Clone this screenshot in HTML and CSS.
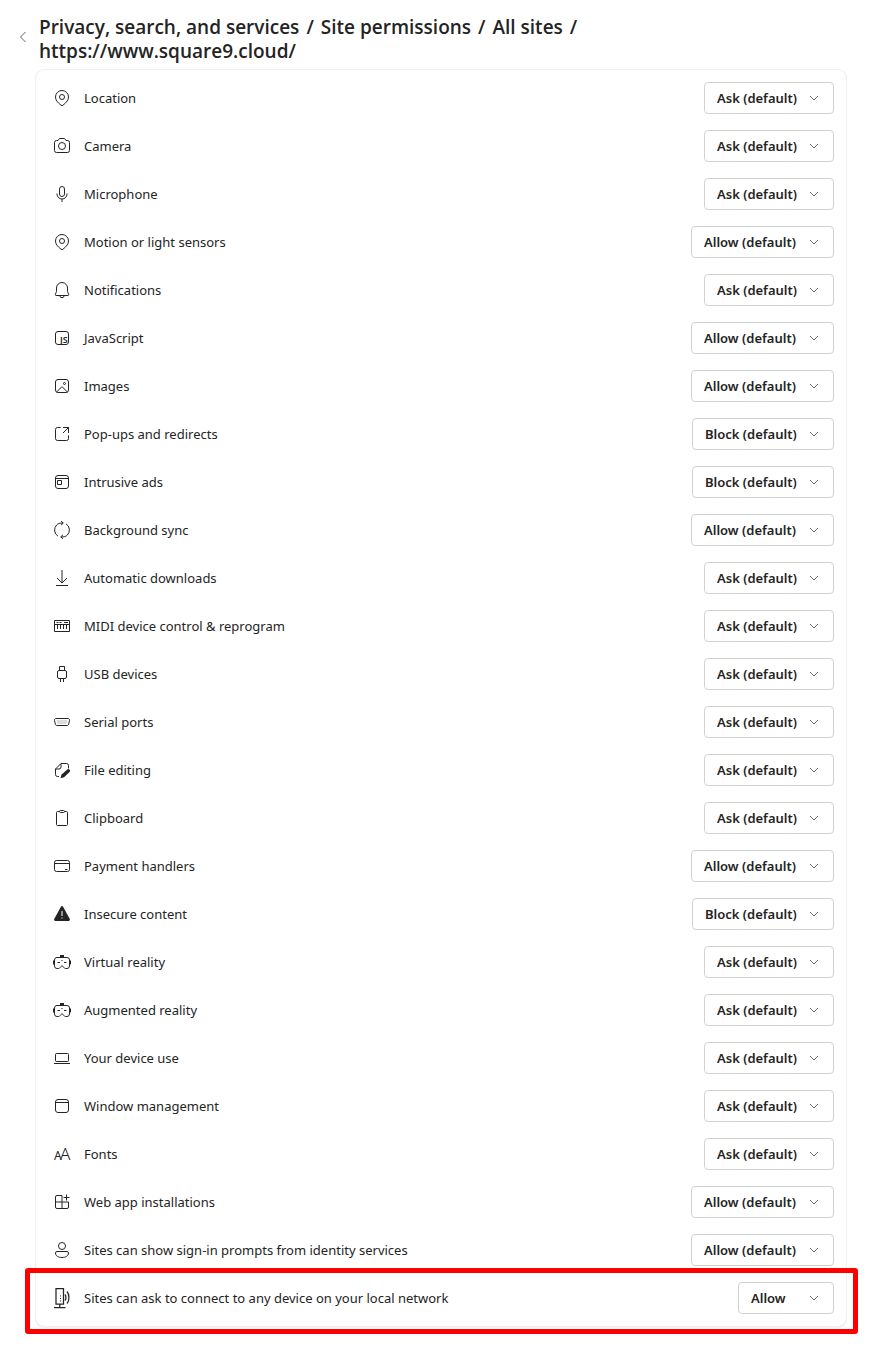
FILE: index.html
```
<!DOCTYPE html>
<html lang="en">
<head>
    <title>Site permissions</title>
    <meta charset="UTF-8">
    <meta name="viewport" content="width=device-width, initial-scale=1.0">
    <link rel="stylesheet" href="styles.css">
</head>
<body>
    <!-- shared shapes -->
    <svg class="shapes" aria-hidden="true">
        <symbol id="chevron" viewBox="0 0 12 12"><path d="M2 4l4 4 4-4"/></symbol>
        <symbol id="pin" viewBox="0 0 20 20"><path d="M10 2.5A6.5 6.5 0 0 0 3.5 9c0 3.2 2.2 5.5 5.5 8.2a1.6 1.6 0 0 0 2 0c3.3-2.7 5.5-5 5.5-8.2A6.5 6.5 0 0 0 10 2.5z"/><circle cx="10" cy="9" r="2.5"/></symbol>
        <symbol id="headset" viewBox="0 0 20 20"><path d="M5 5.5h10A2.5 2.500 0 0 1 17.500 8v6a2.500 2.500 0 0 1-2.500 2.500h-1.500c-.8 0-1.200-.4-1.600-1l-.7-.9c-.6-.8-1.800-.8-2.400 0l-.7.9c-.4.6-.8 1-1.600 1H5A2.500 2.500 0 0 1 2.500 14V8A2.500 2.500 0 0 1 5 5.500zM5.500 10.500H8M12 10.500h2.500"/><path class="dot" d="M9 8.500h2"/><path class="solid" d="M8 3h4v2.500H8zM1 8.500h1.500v4H1zM17.500 8.500H19v4h-1.500z"/></symbol>
    </svg>

    <header class="page-header">
        <button type="button" class="back" aria-label="Back">
            <svg viewBox="0 0 10 14"><path d="M7.500 2L2.500 7l5 5"/></svg>
        </button>
        <h1 class="breadcrumb">
            <a href="#">Privacy, search, and services</a>
            <span>/</span>
            <a href="#">Site permissions</a>
            <span>/</span>
            <a href="#">All sites</a>
            <span>/</span>
            <span>https://www.square9.cloud/</span>
        </h1>
    </header>

    <main class="card">
        <div class="row">
            <svg class="icon"><use href="#pin"/></svg>
            <label for="location">Location</label>
            <div class="picker">
                <select id="location" class="ask"><option>Ask (default)</option><option>Allow</option><option>Block</option></select>
                <svg class="chevron"><use href="#chevron"/></svg>
            </div>
        </div>
        <div class="row">
            <svg class="icon" viewBox="0 0 20 20"><path d="M7.5 2.500h5l1.500 2h1.500a2 2 0 0 1 2 2v8a2 2 0 0 1-2 2h-11a2 2 0 0 1-2-2v-8a2 2 0 0 1 2-2H6z"/><circle cx="10" cy="10" r="3.500"/></svg>
            <label for="camera">Camera</label>
            <div class="picker">
                <select id="camera" class="ask"><option>Ask (default)</option><option>Allow</option><option>Block</option></select>
                <svg class="chevron"><use href="#chevron"/></svg>
            </div>
        </div>
        <div class="row">
            <svg class="icon" viewBox="0 0 20 20"><rect x="7.500" y="2.500" width="5" height="10" rx="2.500"/><path d="M5 9.500v.5a5 5 0 0 0 10 0v-.5M10 15v3"/></svg>
            <label for="microphone">Microphone</label>
            <div class="picker">
                <select id="microphone" class="ask"><option>Ask (default)</option><option>Allow</option><option>Block</option></select>
                <svg class="chevron"><use href="#chevron"/></svg>
            </div>
        </div>
        <div class="row">
            <svg class="icon"><use href="#pin"/></svg>
            <label for="sensors">Motion or light sensors</label>
            <div class="picker">
                <select id="sensors" class="allow"><option>Allow (default)</option><option>Block</option></select>
                <svg class="chevron"><use href="#chevron"/></svg>
            </div>
        </div>
        <div class="row">
            <svg class="icon" viewBox="0 0 20 20"><path d="M10 2.500A5.500 5.500 0 0 0 4.500 8v3.500l-1.200 3c-.1.500.1 1 .7 1h12c.6 0 .8-.5.7-1l-1.200-3V8A5.500 5.500 0 0 0 10 2.500zM7.800 15.500a2.200 2.200 0 0 0 4.400 0"/></svg>
            <label for="notifications">Notifications</label>
            <div class="picker">
                <select id="notifications" class="ask"><option>Ask (default)</option><option>Allow</option><option>Block</option></select>
                <svg class="chevron"><use href="#chevron"/></svg>
            </div>
        </div>
        <div class="row">
            <svg class="icon" viewBox="0 0 20 20"><rect x="3.500" y="3.500" width="13" height="13" rx="2.500"/><text class="js-text" x="8" y="15">JS</text></svg>
            <label for="javascript">JavaScript</label>
            <div class="picker">
                <select id="javascript" class="allow"><option>Allow (default)</option><option>Block</option></select>
                <svg class="chevron"><use href="#chevron"/></svg>
            </div>
        </div>
        <div class="row">
            <svg class="icon" viewBox="0 0 20 20"><rect x="3.500" y="3.500" width="13" height="13" rx="2.500"/><path d="M4.500 16l4.800-4.700a1 1 0 0 1 1.400 0l4.800 4.700"/><circle cx="12.500" cy="7.500" r="1"/></svg>
            <label for="images">Images</label>
            <div class="picker">
                <select id="images" class="allow"><option>Allow (default)</option><option>Block</option></select>
                <svg class="chevron"><use href="#chevron"/></svg>
            </div>
        </div>
        <div class="row">
            <svg class="icon" viewBox="0 0 20 20"><path d="M8.500 3.500h-3a2 2 0 0 0-2 2v9a2 2 0 0 0 2 2h9a2 2 0 0 0 2-2v-3M11 3.500h5.500V9M16.500 3.500L11 9"/></svg>
            <label for="popups">Pop-ups and redirects</label>
            <div class="picker">
                <select id="popups" class="block"><option>Block (default)</option><option>Allow</option></select>
                <svg class="chevron"><use href="#chevron"/></svg>
            </div>
        </div>
        <div class="row">
            <svg class="icon" viewBox="0 0 20 20"><rect x="3.500" y="3.500" width="13" height="13" rx="2.500"/><path d="M3.500 6.500h13M5.500 8.500h4v4h-4z"/></svg>
            <label for="ads">Intrusive ads</label>
            <div class="picker">
                <select id="ads" class="block"><option>Block (default)</option><option>Allow</option></select>
                <svg class="chevron"><use href="#chevron"/></svg>
            </div>
        </div>
        <div class="row">
            <svg class="icon" viewBox="0 0 20 20"><path d="M6 16.200A7.300 7.300 0 0 1 4.600 5C6 3.500 8 2.900 11 3.100M9 1.200l2.300 1.900L9 5.200M14 3.800A7.300 7.300 0 0 1 15.400 15c-1.400 1.500-3.400 2.100-6.400 1.900M11 14.800l-2.300 2.100L11 18.800"/></svg>
            <label for="sync">Background sync</label>
            <div class="picker">
                <select id="sync" class="allow"><option>Allow (default)</option><option>Block</option></select>
                <svg class="chevron"><use href="#chevron"/></svg>
            </div>
        </div>
        <div class="row">
            <svg class="icon" viewBox="0 0 20 20"><path d="M10 2v13M5 10l5 5 5-5M4 17.500h12"/></svg>
            <label for="downloads">Automatic downloads</label>
            <div class="picker">
                <select id="downloads" class="ask"><option>Ask (default)</option><option>Allow</option><option>Block</option></select>
                <svg class="chevron"><use href="#chevron"/></svg>
            </div>
        </div>
        <div class="row">
            <svg class="icon" viewBox="0 0 20 20"><path d="M2.500 4.500h15v11h-15zM2.500 8.500h15M4.500 6.500h2M7.500 6.500h2M12 6.500h4M5.500 9v4M8.500 9v4M11.500 9v4M14.500 9v4"/></svg>
            <label for="midi">MIDI device control &amp; reprogram</label>
            <div class="picker">
                <select id="midi" class="ask"><option>Ask (default)</option><option>Allow</option><option>Block</option></select>
                <svg class="chevron"><use href="#chevron"/></svg>
            </div>
        </div>
        <div class="row">
            <svg class="icon" viewBox="0 0 20 20"><path d="M7.500 6.500v-4h5v4M8.500 15v3M11.500 15v3"/><rect x="5.500" y="6.500" width="9" height="8" rx="1.500"/></svg>
            <label for="usb">USB devices</label>
            <div class="picker">
                <select id="usb" class="ask"><option>Ask (default)</option><option>Allow</option><option>Block</option></select>
                <svg class="chevron"><use href="#chevron"/></svg>
            </div>
        </div>
        <div class="row">
            <svg class="icon" viewBox="0 0 20 20"><path d="M4 6.500h12c1 0 1.700.8 1.500 1.800l-.8 3.700c-.2.900-.8 1.500-1.700 1.500H5c-.9 0-1.500-.6-1.700-1.500l-.8-3.700C2.300 7.300 3 6.500 4 6.500z"/><path class="shade" d="M4.500 8h11l-1 4h-9z"/></svg>
            <label for="serial">Serial ports</label>
            <div class="picker">
                <select id="serial" class="ask"><option>Ask (default)</option><option>Allow</option><option>Block</option></select>
                <svg class="chevron"><use href="#chevron"/></svg>
            </div>
        </div>
        <div class="row">
            <svg class="icon" viewBox="0 0 20 20"><path d="M16.500 8.500v-3a2 2 0 0 0-2-2H9l-5.500 5.500v5.500a2 2 0 0 0 2 2H7M9 3.500V7a2 2 0 0 1-2 2H3.500"/><path class="solid" d="M15 9.700a1.700 1.700 0 0 1 2.600 2.400L12 17.300 8.500 18.200l.9-3.500z"/></svg>
            <label for="files">File editing</label>
            <div class="picker">
                <select id="files" class="ask"><option>Ask (default)</option><option>Allow</option><option>Block</option></select>
                <svg class="chevron"><use href="#chevron"/></svg>
            </div>
        </div>
        <div class="row">
            <svg class="icon" viewBox="0 0 20 20"><path d="M7.500 3.500h-2a1 1 0 0 0-1 1v12a1 1 0 0 0 1 1h9a1 1 0 0 0 1-1v-12a1 1 0 0 0-1-1h-2"/><rect x="7.500" y="2.500" width="5" height="2" rx="1"/></svg>
            <label for="clipboard">Clipboard</label>
            <div class="picker">
                <select id="clipboard" class="ask"><option>Ask (default)</option><option>Allow</option><option>Block</option></select>
                <svg class="chevron"><use href="#chevron"/></svg>
            </div>
        </div>
        <div class="row">
            <svg class="icon" viewBox="0 0 20 20"><rect x="2.500" y="4.500" width="15" height="11" rx="2"/><path d="M2.500 7.500h15M13 13.500h2.500"/></svg>
            <label for="payment">Payment handlers</label>
            <div class="picker">
                <select id="payment" class="allow"><option>Allow (default)</option><option>Block</option></select>
                <svg class="chevron"><use href="#chevron"/></svg>
            </div>
        </div>
        <div class="row">
            <svg class="icon" viewBox="0 0 20 20"><path class="solid" d="M8.900 2.700a1.300 1.300 0 0 1 2.200 0l6.700 12.400a1.300 1.300 0 0 1-1.100 1.900H3.300a1.300 1.300 0 0 1-1.100-1.900z"/><path class="mark" d="M10 7v5M10 13.500v1"/></svg>
            <label for="insecure">Insecure content</label>
            <div class="picker">
                <select id="insecure" class="block"><option>Block (default)</option><option>Allow</option></select>
                <svg class="chevron"><use href="#chevron"/></svg>
            </div>
        </div>
        <div class="row">
            <svg class="icon"><use href="#headset"/></svg>
            <label for="vr">Virtual reality</label>
            <div class="picker">
                <select id="vr" class="ask"><option>Ask (default)</option><option>Allow</option><option>Block</option></select>
                <svg class="chevron"><use href="#chevron"/></svg>
            </div>
        </div>
        <div class="row">
            <svg class="icon"><use href="#headset"/></svg>
            <label for="ar">Augmented reality</label>
            <div class="picker">
                <select id="ar" class="ask"><option>Ask (default)</option><option>Allow</option><option>Block</option></select>
                <svg class="chevron"><use href="#chevron"/></svg>
            </div>
        </div>
        <div class="row">
            <svg class="icon" viewBox="0 0 20 20"><rect x="3.500" y="5.500" width="13" height="8" rx="1"/><path d="M2 15.500h16"/></svg>
            <label for="device-use">Your device use</label>
            <div class="picker">
                <select id="device-use" class="ask"><option>Ask (default)</option><option>Allow</option><option>Block</option></select>
                <svg class="chevron"><use href="#chevron"/></svg>
            </div>
        </div>
        <div class="row">
            <svg class="icon" viewBox="0 0 20 20"><rect x="3.500" y="3.500" width="13" height="13" rx="2.500"/><path d="M3.500 6.500h13"/></svg>
            <label for="windows">Window management</label>
            <div class="picker">
                <select id="windows" class="ask"><option>Ask (default)</option><option>Allow</option><option>Block</option></select>
                <svg class="chevron"><use href="#chevron"/></svg>
            </div>
        </div>
        <div class="row">
            <svg class="icon" viewBox="0 0 20 20"><text class="small-a" x="2" y="16">A</text><text class="big-a" x="8" y="16">A</text></svg>
            <label for="fonts">Fonts</label>
            <div class="picker">
                <select id="fonts" class="ask"><option>Ask (default)</option><option>Allow</option><option>Block</option></select>
                <svg class="chevron"><use href="#chevron"/></svg>
            </div>
        </div>
        <div class="row">
            <svg class="icon" viewBox="0 0 20 20"><path d="M10 3.500H5a1.500 1.500 0 0 0-1.500 1.500v10A1.500 1.500 0 0 0 5 16.500h10a1.500 1.500 0 0 0 1.500-1.500v-5h-13M10 3.500v13M14.500 2.500v6M11.500 5.500h6"/></svg>
            <label for="web-apps">Web app installations</label>
            <div class="picker">
                <select id="web-apps" class="allow"><option>Allow (default)</option><option>Block</option></select>
                <svg class="chevron"><use href="#chevron"/></svg>
            </div>
        </div>
        <div class="row">
            <svg class="icon" viewBox="0 0 20 20"><circle cx="10" cy="6" r="3.500"/><path d="M5 11.500h10a1.500 1.500 0 0 1 1.500 1.500c0 2.800-2.700 4.500-6.500 4.500S3.500 15.800 3.500 13A1.500 1.500 0 0 1 5 11.500z"/></svg>
            <label for="sign-in">Sites can show sign-in prompts from identity services</label>
            <div class="picker">
                <select id="sign-in" class="allow"><option>Allow (default)</option><option>Block</option></select>
                <svg class="chevron"><use href="#chevron"/></svg>
            </div>
        </div>
        <div class="row highlighted">
            <svg class="icon" viewBox="0 0 20 20"><path class="tower" d="M4 .5h7.500V16H4zM7.800 16v3.500M2 19.500h11.500M13 6.500c1.200 1.400 1.200 4.600 0 6M15 3.500c2.600 3 2.600 9 0 12"/><path class="solid" d="M8 7.500h1v1H8zM8 10h1v1H8zM8 12.500h1v1H8z"/></svg>
            <label for="network">Sites can ask to connect to any device on your local network</label>
            <div class="picker">
                <select id="network" class="plain"><option>Allow</option><option>Ask</option><option>Block</option></select>
                <svg class="chevron"><use href="#chevron"/></svg>
            </div>
        </div>
    </main>
</body>
</html>
```
FILE: styles.css
```
body {
    margin: 0;
    padding: 15px 31px 20px 12px;
    font-family: "Noto Sans", "Open Sans", sans-serif;
    font-size: 13px;
    line-height: 20px;
    color: #242424;
    background-color: #fff;
}

.shapes {
    display: none;
}

svg {
    fill: none;
    stroke: #242424;
}

.page-header {
    display: flex;
    align-items: flex-start;
}

.back {
    display: flex;
    justify-content: center;
    align-items: center;
    width: 24px;
    height: 44px;
    margin-right: 4px;
    padding: 0;
    border: none;
    background: none;
    cursor: pointer;
}

.back svg {
    width: 10px;
    height: 14px;
    stroke: #616161;
}

.breadcrumb {
    display: flex;
    flex-wrap: wrap;
    column-gap: 7px;
    margin: 0;
    padding-right: 40px;
    font-family: "Open Sans", "Noto Sans", sans-serif;
    font-size: 19px;
    font-weight: 600;
    line-height: 24px;
}

.breadcrumb a {
    color: inherit;
    text-decoration: none;
}

.card {
    margin: 7px 0 0 24px;
    padding: 4px 12px 4px 16px;
    border-radius: 8px;
    box-shadow: 0 0 0 1px #f0f0f0, 0 1px 2px rgba(0, 0, 0, 0.14);
}

.row {
    position: relative;
    display: flex;
    align-items: center;
    height: 48px;
}

.row label {
    flex: 1;
    margin-left: 12px;
}

.icon {
    width: 20px;
    height: 20px;
    overflow: visible;
}

.icon text,
.solid {
    fill: #242424;
    stroke: none;
}

.shade {
    fill: #dcdcdc;
    stroke: none;
}

.mark {
    stroke: #fff;
}

.dot {
    stroke: #8a8a8a;
}

.tower {
    stroke-width: 1.25;
}

.js-text {
    font-size: 9px;
    font-weight: 600;
}

.small-a {
    font-size: 12px;
}

.big-a {
    font-size: 17px;
    font-weight: 300;
}

.picker {
    display: grid;
    align-items: center;
}

.picker select,
.picker .chevron {
    grid-area: 1 / 1;
}

select {
    appearance: none;
    height: 32px;
    padding: 0 12px;
    border: 1px solid #d1d1d1;
    border-radius: 4px;
    background-color: #fff;
    color: #242424;
    font-family: inherit;
    font-size: 13px;
    font-weight: 600;
    cursor: pointer;
}

select:hover {
    background-color: #f5f5f5;
}

.ask {
    width: 130px;
}

.allow {
    width: 143px;
}

.block {
    width: 142px;
}

.plain {
    width: 96px;
}

.chevron {
    justify-self: end;
    width: 12px;
    height: 12px;
    margin-right: 14px;
    stroke: #707070;
    pointer-events: none;
}

/* red frame around the setting to change */
.highlighted::after {
    content: "";
    position: absolute;
    inset: -6px -24px -12px -27px;
    border: 5px solid #fe0000;
    border-radius: 3px;
    pointer-events: none;
}
```
